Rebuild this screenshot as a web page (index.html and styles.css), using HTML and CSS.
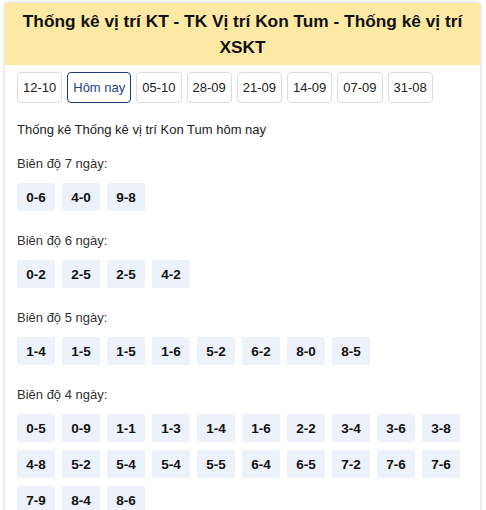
FILE: index.html
```html
<!DOCTYPE html>
<html lang="vi">
<head>
<meta charset="utf-8">
<title>Thống kê vị trí KT</title>
<link rel="stylesheet" href="styles.css">
</head>
<body>
<div class="card">
  <div class="head">
    <h1 class="title">Thống kê vị trí KT - TK Vị trí Kon Tum - Thống kê vị trí XSKT</h1>
  </div>
  <div class="body">
    <div class="dates">
      <a class="date">12-10</a>
      <a class="date active">Hôm nay</a>
      <a class="date">05-10</a>
      <a class="date">28-09</a>
      <a class="date">21-09</a>
      <a class="date">14-09</a>
      <a class="date">07-09</a>
      <a class="date">31-08</a>
    </div>
    <p class="intro">Thống kê Thống kê vị trí Kon Tum hôm nay</p>

    <div class="section">
      <div class="label">Biên độ 7 ngày:</div>
      <div class="chips">
        <span class="chip">0-6</span><span class="chip">4-0</span><span class="chip">9-8</span>
      </div>
    </div>

    <div class="section">
      <div class="label">Biên độ 6 ngày:</div>
      <div class="chips">
        <span class="chip">0-2</span><span class="chip">2-5</span><span class="chip">2-5</span><span class="chip">4-2</span>
      </div>
    </div>

    <div class="section">
      <div class="label">Biên độ 5 ngày:</div>
      <div class="chips">
        <span class="chip">1-4</span><span class="chip">1-5</span><span class="chip">1-5</span><span class="chip">1-6</span><span class="chip">5-2</span><span class="chip">6-2</span><span class="chip">8-0</span><span class="chip">8-5</span>
      </div>
    </div>

    <div class="section">
      <div class="label">Biên độ 4 ngày:</div>
      <div class="chips">
        <span class="chip">0-5</span><span class="chip">0-9</span><span class="chip">1-1</span><span class="chip">1-3</span><span class="chip">1-4</span><span class="chip">1-6</span><span class="chip">2-2</span><span class="chip">3-4</span><span class="chip">3-6</span><span class="chip">3-8</span>
        <span class="chip">4-8</span><span class="chip">5-2</span><span class="chip">5-4</span><span class="chip">5-4</span><span class="chip">5-5</span><span class="chip">6-4</span><span class="chip">6-5</span><span class="chip">7-2</span><span class="chip">7-6</span><span class="chip">7-6</span>
        <span class="chip">7-9</span><span class="chip">8-4</span><span class="chip">8-6</span>
      </div>
    </div>
  </div>
</div>
</body>
</html>
```

FILE: styles.css
```css
html, body {
  margin: 0;
  padding: 0;
  background: #ffffff;
}
body {
  font-family: "Liberation Sans", Arial, sans-serif;
  color: #222;
}
.card {
  margin: 3px 6px 0 5px;
  background: #fff;
  box-shadow: 0 0 4px rgba(0, 0, 0, 0.22);
  min-height: 520px;
}
.head {
  background: #fee9a4;
  padding: 5px 8px;
}
.title {
  margin: 0;
  font-size: 17.3px;
  line-height: 26px;
  font-weight: bold;
  text-align: center;
  color: #111;
}
.body {
  padding: 7px 12px 0 12px;
}
.dates {
  display: flex;
  gap: 5px;
}
.date {
  display: flex;
  align-items: center;
  justify-content: center;
  height: 31px;
  box-sizing: border-box;
  padding: 0 5px;
  border: 1px solid #dcdcdc;
  border-radius: 4px;
  font-size: 13px;
  color: #222;
  min-width: 45px;
}
.date.active {
  border-color: #1d3a7c;
  color: #1d3f8f;
}
.intro {
  margin: 18px 0 0 0;
  font-size: 13px;
  line-height: 18px;
  color: #222;
}
.section {
  margin-top: 16px;
}
.section + .section {
  margin-top: 21px;
}
.label {
  font-size: 13px;
  line-height: 18px;
  color: #333;
  margin-bottom: 10px;
}
.chips {
  display: flex;
  flex-wrap: wrap;
  gap: 8px 7px;
}
.chip {
  width: 38px;
  height: 28px;
  display: flex;
  align-items: center;
  justify-content: center;
  background: #edf1f9;
  border-radius: 2px;
  font-size: 13.5px;
  font-weight: bold;
  color: #111;
}
```
